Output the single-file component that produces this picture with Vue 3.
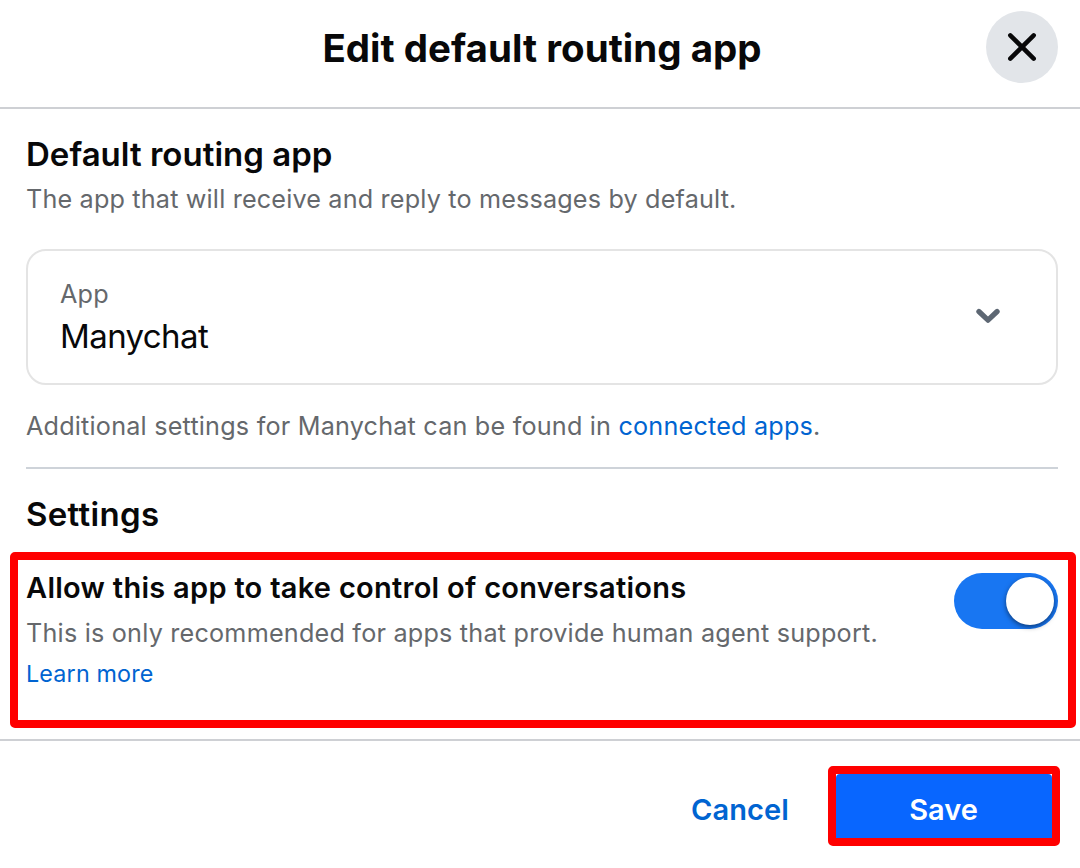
<script setup>
import { ref } from 'vue';

const app = ref('Manychat');
const takeControl = ref(true);

function toggleControl() {
  takeControl.value = !takeControl.value;
}
</script>

<template>
  <main>
    <header>
      <h1>Edit default routing app</h1>
      <button class="close-btn" aria-label="Close">
        <svg width="72" height="72" viewBox="0 0 72 72">
          <path d="M24.3 24.3L47.7 47.7M47.7 24.3L24.3 47.7" />
        </svg>
      </button>
    </header>

    <section class="routing">
      <h2>Default routing app</h2>
      <p class="desc intro">The app that will receive and reply to messages by default.</p>

      <div class="select">
        <div>
          <div class="select-label">App</div>
          <div class="select-value">{{ app }}</div>
        </div>
        <svg class="chevron" width="24" height="16" viewBox="0 0 24 16">
          <path d="M2.9 3.5L12 12.2L21.1 3.5" />
        </svg>
      </div>

      <p class="desc additional">Additional settings for {{ app }} can be found in <a href="#">connected apps</a>.</p>
    </section>

    <h2 class="settings-title">Settings</h2>

    <section class="control">
      <div>
        <h3>Allow this app to take control of conversations</h3>
        <p class="desc recommended">This is only recommended for apps that provide human agent support.</p>
        <a class="learn-more" href="#">Learn more</a>
      </div>
      <button class="toggle" :class="{ on: takeControl }" role="switch" :aria-checked="takeControl" @click="toggleControl">
        <span class="knob"></span>
      </button>
    </section>

    <footer>
      <button class="cancel-btn">Cancel</button>
      <div class="save-frame">
        <button class="save-btn">Save</button>
      </div>
    </footer>
  </main>
</template>

<style>
body {
  background-color: #fff;
}
</style>

<style scoped>
main {
  width: 1080px;
  height: 868px;
  overflow: hidden;
  background-color: #fff;
  color: #080809;
  font-family: Inter, 'Liberation Sans', sans-serif;
}

h1, h2, h3, p {
  margin: 0;
}

h1, h2, h3 {
  font-weight: 600;
  white-space: nowrap;
}

button {
  padding: 0;
  border: none;
  font-family: inherit;
  cursor: pointer;
}

a {
  color: #0064d1;
  text-decoration: none;
}

header {
  box-sizing: border-box;
  height: 109px;
  display: grid;
  grid-template-columns: 72px 1fr 72px;
  align-items: start;
  padding: 11px 22px 0 26px;
  border-bottom: 2px solid #ced0d4;
}

h1 {
  grid-column: 2;
  padding-top: 1px;
  font-size: 38.5px;
  font-weight: 700;
  line-height: 72px;
  letter-spacing: 0.02px;
  text-align: center;
}

.close-btn {
  width: 72px;
  height: 72px;
  border-radius: 50%;
  background-color: #e2e5e9;
}

.close-btn svg {
  display: block;
}

.close-btn path {
  fill: none;
  stroke: #080809;
  stroke-width: 4.5;
  stroke-linecap: round;
}

.routing {
  margin: 0 22px 0 26px;
  padding: 25px 0 23px;
  border-bottom: 2px solid #ced3d9;
}

h2 {
  font-size: 33px;
  line-height: 40px;
  letter-spacing: 0.02px;
}

.desc {
  color: #65686c;
  font-size: 25.2px;
  line-height: 36px;
  letter-spacing: 0.17px;
  white-space: nowrap;
}

.intro {
  margin-top: 7px;
}

.additional {
  letter-spacing: 0.2px;
}

.select {
  box-sizing: border-box;
  height: 136px;
  display: flex;
  justify-content: space-between;
  margin: 32px 0 23px;
  padding: 25px 56px 0 32px;
  border: 2px solid #e4e4e4;
  border-radius: 20px;
}

.select-label {
  color: #65686c;
  font-size: 25.2px;
  line-height: 36px;
  letter-spacing: 0.2px;
}

.select-value {
  margin-top: 4px;
  font-size: 33px;
  line-height: 40px;
  letter-spacing: -0.6px;
}

.chevron {
  margin-top: 32px;
}

.chevron path {
  fill: none;
  stroke: #5d6773;
  stroke-width: 5.2;
  stroke-linecap: round;
  stroke-linejoin: round;
}

.settings-title {
  margin: 25px 26px 0;
  letter-spacing: 0.32px;
}

.control {
  box-sizing: border-box;
  height: 176px;
  display: flex;
  justify-content: space-between;
  margin: 18px 4px 11px 10px;
  padding: 10px 10px 0 8px;
  border: 8px solid #ff0000;
  border-radius: 5px;
}

h3 {
  font-size: 29px;
  line-height: 36px;
  letter-spacing: 0.28px;
}

.recommended {
  margin: 9px 0 5px;
  letter-spacing: 0.21px;
}

.learn-more {
  display: block;
  font-size: 23.3px;
  line-height: 36px;
  letter-spacing: 0.17px;
}

.toggle {
  width: 104px;
  height: 56px;
  display: flex;
  align-items: center;
  margin-top: 3px;
  padding: 4px;
  border-radius: 28px;
  background-color: #bcc0c4;
}

.toggle.on {
  justify-content: flex-end;
  background-color: #1876f2;
}

.knob {
  width: 48px;
  height: 48px;
  border-radius: 50%;
  background-color: #fff;
  box-shadow: 0 2px 5px rgba(0, 0, 0, 0.5);
}

footer {
  display: flex;
  justify-content: flex-end;
  padding: 25px 20px 0 0;
  border-top: 2px solid #ced0d4;
}

.cancel-btn {
  width: 98px;
  height: 80px;
  margin-right: 39px;
  padding-top: 7px;
  background: none;
  color: #0064d1;
  font-size: 29px;
  font-weight: 600;
  letter-spacing: 0.1px;
  white-space: nowrap;
}

.save-frame {
  width: 216px;
  height: 64px;
  border: 8px solid #ff0000;
  border-radius: 5px;
}

.save-btn {
  width: 216px;
  height: 64px;
  padding: 7px 1px 0 0;
  border-radius: 4px 4px 0 0;
  background-color: #0866ff;
  color: #fff;
  font-size: 29px;
  font-weight: 600;
}
</style>
